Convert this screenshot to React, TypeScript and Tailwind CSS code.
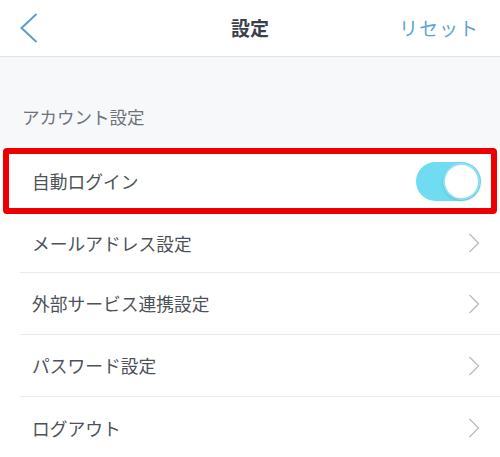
import { useState } from 'react'

const font = { fontFamily: '"Noto Sans CJK JP", "Noto Sans", sans-serif' }

function Chevron() {
  return (
    <svg width="12" height="20" viewBox="0 0 12 20" className="shrink-0">
      <path d="M1.5 1 L10.5 10 L1.5 19" fill="none" stroke="#b9bdc3" strokeWidth="1.4" />
    </svg>
  )
}

function Toggle({ on, onClick }: { on: boolean; onClick: () => void }) {
  return (
    <button
      onClick={onClick}
      className={`relative w-[65px] h-[39px] rounded-full ${on ? 'bg-[#6fdcf1]' : 'bg-[#e5e7eb]'}`}
    >
      <span
        className={`absolute top-[1px] w-[37px] h-[37px] rounded-full bg-white border-2 border-[#8fe2f2] shadow-[0_1px_3px_rgba(0,0,0,0.15)] ${on ? 'right-[1px]' : 'left-[1px]'}`}
      />
    </button>
  )
}

const items = ['メールアドレス設定', '外部サービス連携設定', 'パスワード設定', 'ログアウト']

export default function App() {
  const [autoLogin, setAutoLogin] = useState(true)

  return (
    <div className="w-[500px] h-[457px] bg-white overflow-hidden" style={font}>
      {/* Header */}
      <div className="h-[57px] grid grid-cols-3 items-center border-b border-[#e2e3e6] px-[20px]">
        <svg width="18" height="30" viewBox="0 0 18 30">
          <path d="M16.5 1 L1.5 15 L16.5 29" fill="none" stroke="#5c9dcd" strokeWidth="2" />
        </svg>
        <h1 className="text-[19px] font-bold text-[#3b414b] text-center">設定</h1>
        <div className="text-right">
          <button className="text-[19px] text-[#5fa4d4] tracking-[1px] mr-[1px]">リセット</button>
        </div>
      </div>

      {/* Section header */}
      <div className="bg-[#f7f8fa] h-[91px] flex items-end pb-[18px] px-[22px]">
        <p className="text-[17.5px] text-[#6e737b]">アカウント設定</p>
      </div>

      {/* Auto login (highlighted) */}
      <div className="mx-[3px] h-[66px] border-[6px] border-[#ee0000] rounded-[4px] flex items-center justify-between pl-[23px] pr-[10px] bg-white">
        <span className="text-[17.75px] text-[#4d525a]">自動ログイン</span>
        <Toggle on={autoLogin} onClick={() => setAutoLogin(!autoLogin)} />
      </div>

      {/* Rows */}
      <div>
        {items.map((label, i) => (
          <div key={label} className={`ml-[20px] flex items-center justify-between pl-[12px] pr-[20px] ${i === 0 ? 'h-[59px]' : 'h-[62px]'} ${i < items.length - 1 ? 'border-b border-[#e8e9ec]' : ''}`}>
            <span className="text-[17.75px] text-[#4d525a]">{label}</span>
            <Chevron />
          </div>
        ))}
      </div>
    </div>
  )
}
